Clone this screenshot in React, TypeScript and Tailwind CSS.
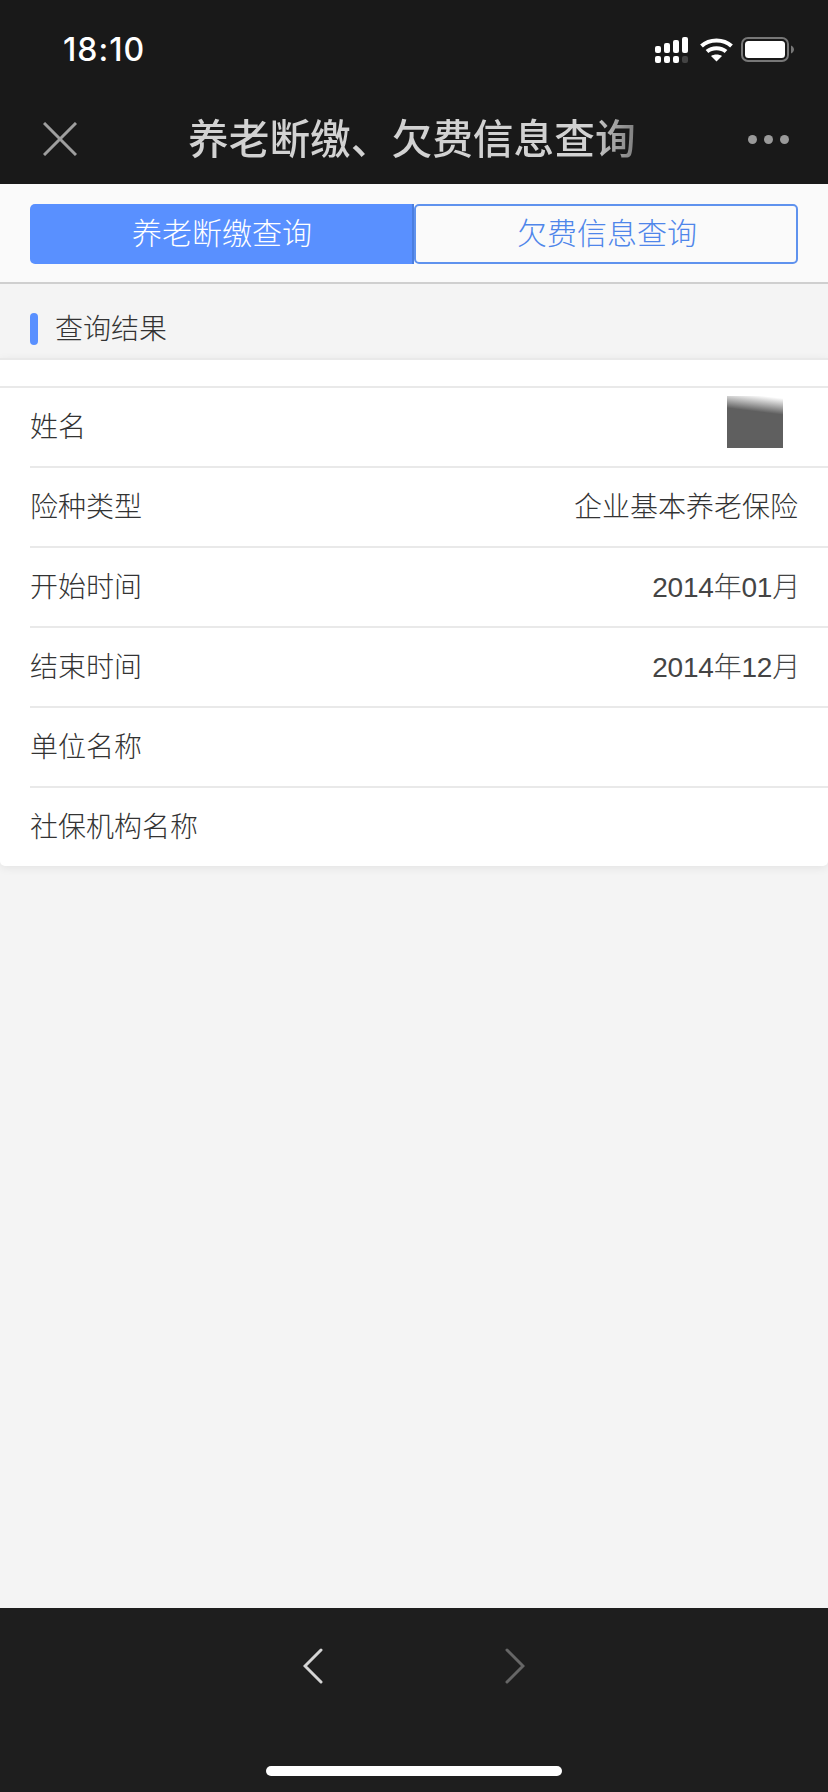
const rows = [
  { label: "姓名", value: "" },
  { label: "险种类型", value: "企业基本养老保险" },
  { label: "开始时间", value: "2014年01月", date: true },
  { label: "结束时间", value: "2014年12月", date: true },
  { label: "单位名称", value: "" },
  { label: "社保机构名称", value: "" },
];

function StatusIcons() {
  return (
    <svg width="139" height="26" viewBox="0 0 139 26" fill="none">
      {/* signal, top row climbs, bottom row is four dots */}
      <rect x="0" y="9" width="6" height="7" rx="2" fill="#fff" />
      <rect x="9" y="6" width="6" height="10" rx="2" fill="#fff" />
      <rect x="18" y="3" width="6" height="13" rx="2" fill="#fff" />
      <rect x="27" y="0" width="6" height="16" rx="2" fill="#fff" />
      <rect x="0" y="19" width="6" height="7" rx="2" fill="#fff" />
      <rect x="9" y="19" width="6" height="7" rx="2" fill="#fff" />
      <rect x="18" y="19" width="6" height="7" rx="2" fill="#fff" />
      <rect x="27" y="19" width="6" height="7" rx="2" fill="#444" />
      {/* wifi */}
      <path d="M46.5 9 C54.5 1.5 68.5 1.5 76.5 9" stroke="#fff" strokeWidth="4" />
      <path d="M52 14.5 C57 10 66 10 71 14.5" stroke="#fff" strokeWidth="4" />
      <path d="M56 19 L61.5 24.5 L67 19 C64 17 59 17 56 19 Z" fill="#fff" />
      {/* battery */}
      <rect x="87" y="1" width="46" height="23" rx="6" stroke="#777" strokeWidth="2" />
      <rect x="90" y="4" width="40" height="17" rx="3.5" fill="#fff" />
      <path d="M136 8.5 C138 9.5 139 11 139 12.5 C139 14 138 15.5 136 16.5 Z" fill="#777" />
    </svg>
  );
}

export default function App() {
  return (
    <div className="font-['Liberation_Sans','Noto_Sans_CJK_SC',sans-serif] flex flex-col h-[1792px] w-[828px] bg-[#f4f4f4] overflow-hidden">
      <div className="h-[184px] bg-[#191919] flex flex-col shrink-0">
        <div className="h-[100px] flex items-start justify-between pl-[63px] pr-[34px] pt-[37px]">
          <span className="font-['Inter',sans-serif] text-[32px] leading-[26px] font-medium tracking-[1px] text-white">18:10</span>
          <StatusIcons />
        </div>
        <div className="flex-1 flex items-center justify-between pl-[43px] pr-[39px] pb-[6px] relative">
          <svg width="34" height="34" viewBox="0 0 34 34">
            <path d="M1 1 L33 33 M33 1 L1 33" stroke="#9e9e9e" strokeWidth="3" />
          </svg>
          <h1 className="absolute left-[188px] w-[447px] mt-[2px] text-[40.7px] font-medium leading-[50px] text-center whitespace-nowrap text-transparent bg-clip-text bg-gradient-to-r from-[#d2d2d2] from-90% to-[#7f7f7f]">
            养老断缴、欠费信息查询
          </h1>
          <div className="flex gap-[7px]">
            <div className="w-[9px] h-[9px] rounded-full bg-[#9a9a9a]" />
            <div className="w-[9px] h-[9px] rounded-full bg-[#9a9a9a]" />
            <div className="w-[9px] h-[9px] rounded-full bg-[#9a9a9a]" />
          </div>
        </div>
      </div>

      <div className="h-[100px] shrink-0 bg-[#fafafa] border-b-2 border-[#cfcfcf] pt-[20px] px-[30px] flex items-start font-light">
        <button className="w-[384px] h-[60px] rounded-l-[5px] bg-[#5990ff] text-white text-[30px] leading-[54px] pl-[2px] border-r-2 border-[#4a7ee0]">
          养老断缴查询
        </button>
        <button className="w-[384px] h-[60px] rounded-[5px] border-2 border-[#5f92ee] text-[#4f86ea] text-[30px] leading-[52px] pl-[2px]">
          欠费信息查询
        </button>
      </div>

      <div className="h-[74px] shrink-0 flex items-center pl-[30px] pt-[16px] gap-[17px]">
        <div className="w-[8px] h-[32px] rounded-[4px] bg-[#5990ff]" />
        <span className="text-[28px] leading-[36px] pt-[2px] box-content font-light text-[#333]">查询结果</span>
      </div>

      <div className="bg-white rounded-b-[5px] shadow-[0_2px_10px_rgba(0,0,0,0.07)] border-t-2 border-[#e9e9e9]">
        <div className="h-[26px] border-b-2 border-[#e9e9e9] box-content" />
        {rows.map((row, i) => (
          <div key={row.label} className="pl-[30px]">
            <div
              className={`flex items-center justify-between pr-[30px] pt-[2px] text-[28px] font-light text-[#333] ${i === 0 ? "h-[78px]" : "h-[80px] border-t-2 border-[#e9e9e9]"}`}
            >
              <span>{row.label}</span>
              {i === 0 ? (
                <div className="w-[56px] h-[52px] mr-[15px] -mt-[13px] bg-[linear-gradient(187deg,#ffffff_4%,#5f5f5f_32%)]" />
              ) : (
                <span className={row.date ? "tracking-[-0.2px] -mr-[2px] text-[#444]" : ""}>{row.value}</span>
              )}
            </div>
          </div>
        ))}
      </div>

      <div className="flex-1" />

      <div className="h-[184px] shrink-0 bg-[#1e1e1e] flex flex-col items-center">
        <div className="flex items-center gap-[182px] mt-[40px]">
          <svg width="20" height="36" viewBox="0 0 20 36" fill="none">
            <path d="M18 2 L2 18 L18 34" stroke="#d4d4d4" strokeWidth="3" strokeLinecap="round" />
          </svg>
          <svg width="20" height="36" viewBox="0 0 20 36" fill="none">
            <path d="M2 2 L18 18 L2 34" stroke="#666" strokeWidth="3" strokeLinecap="round" />
          </svg>
        </div>
        <div className="mt-auto mb-[16px] w-[296px] h-[10px] rounded-full bg-white" />
      </div>
    </div>
  );
}
